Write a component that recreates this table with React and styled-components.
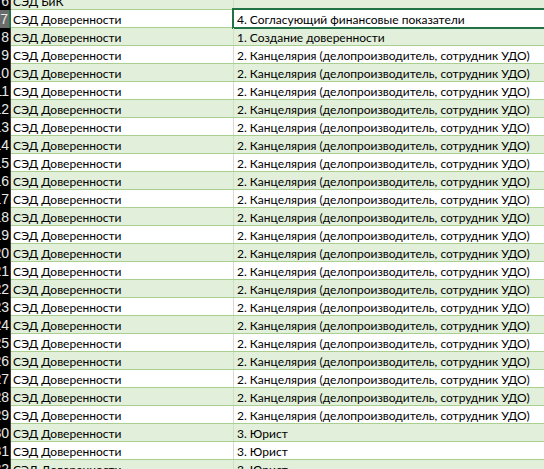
import React from 'react'
import styled, { createGlobalStyle } from 'styled-components'

const GlobalStyle = createGlobalStyle`
html,body{
margin:0;
padding:0;
background:#fff;
overflow:hidden;
}
`

const rows = [
  { n: 6, a: 'СЭД БиК', b: '' },
  { n: 7, a: 'СЭД Доверенности', b: '4. Согласующий финансовые показатели', selected: true },
  { n: 8, a: 'СЭД Доверенности', b: '1. Создание доверенности' },
  ...Array.from({ length: 21 }, (_, i) => ({
    n: 9 + i,
    a: 'СЭД Доверенности',
    b: '2. Канцелярия (делопроизводитель, сотрудник УДО)',
  })),
  { n: 30, a: 'СЭД Доверенности', b: '3. Юрист' },
  { n: 31, a: 'СЭД Доверенности', b: '3. Юрист' },
  { n: 32, a: 'СЭД Доверенности', b: '3. Юрист' },
]

export default function App() {
  return (
    <>
      <GlobalStyle />
      <Sheet>
        {rows.map((r) => {
          const band = r.n % 2 === 0
          return (
            <Row key={r.n} band={band}>
              <RowHead active={r.selected}>
                <span>{r.n}</span>
              </RowHead>
              <Cell band={band}>{r.a}</Cell>
              <Cell band={band} last selected={r.selected}>{r.b}</Cell>
            </Row>
          )
        })}
      </Sheet>
    </>
  )
}

const Sheet = styled.div`
margin-top:-8px;
width:544px;
font-family:Lato,"Liberation Sans",sans-serif;
font-size:12px;
color:#000;
`
const Row = styled.div`
display:grid;
grid-template-columns:11px 223px 1fr;
height:18px;
box-sizing:border-box;
background:${(p) => (p.band ? '#e2efda' : '#fff')};
border-bottom:1px solid #a9d08e;
`
const RowHead = styled.div`
display:flex;
justify-content:flex-end;
align-items:center;
overflow:hidden;
background:${(p) => (p.active ? '#6b6b6b' : '#000')};
border-right:${(p) => (p.active ? '2px solid #217346' : '1px solid #3a3a3a')};
box-sizing:border-box;
color:#e8e8e8;
font-family:"Liberation Sans",sans-serif;
font-size:14px;
margin-bottom:-1px;
padding-right:1px;
span{
white-space:nowrap;
}
`
const Cell = styled.div`
position:relative;
display:flex;
align-items:center;
padding-left:${(p) => (p.last ? '3px' : '2px')};
padding-top:1px;
white-space:nowrap;
overflow:visible;
box-sizing:border-box;
border-right:${(p) => (p.last ? 'none' : p.band ? '1px solid #d0e0c4' : '1px solid #d9d9d9')};
${(p) =>
  p.selected &&
  `
&::after{
content:"";
position:absolute;
left:-2px;
top:-2px;
right:-6px;
bottom:-2px;
border:2px solid #217346;
}
`}
`
